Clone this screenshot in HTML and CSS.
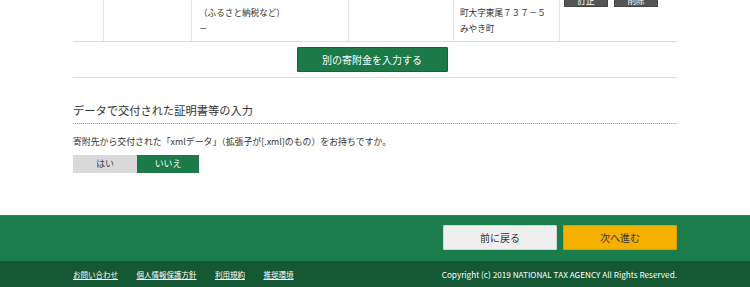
FILE: index.html
```html
<!DOCTYPE html>
<html lang="ja">
<head>
<meta charset="utf-8">
<link rel="stylesheet" href="styles.css">
</head>
<body>
<main class="content">
  <div class="table-clip">
    <div class="row">
      <div class="cell c1"></div>
      <div class="cell c2"></div>
      <div class="cell c3"><p>（ふるさと納税など）</p><p>－</p></div>
      <div class="cell c4"></div>
      <div class="cell c5"><p>町大字東尾７３７－５</p><p>みやき町</p></div>
      <div class="cell c6"><div class="ops"><span class="op">訂正</span><span class="op">削除</span></div></div>
    </div>
  </div>
  <div class="add-row">
    <button class="btn-green">別の寄附金を入力する</button>
  </div>
  <section class="xml">
    <h2 class="heading">データで交付された証明書等の入力</h2>
    <p class="question">寄附先から交付された「xmlデータ」（拡張子が[.xml]のもの）をお持ちですか。</p>
    <div class="toggle">
      <span class="opt">はい</span><span class="opt on">いいえ</span>
    </div>
  </section>
</main>
<footer class="footer">
  <div class="nav-band">
    <div class="inner nav">
      <button class="btn back">前に戻る</button>
      <button class="btn next">次へ進む</button>
    </div>
  </div>
  <div class="bottom-band">
    <div class="inner bottom">
      <ul class="links">
        <li><a href="#">お問い合わせ</a></li>
        <li><a href="#">個人情報保護方針</a></li>
        <li><a href="#">利用規約</a></li>
        <li><a href="#">推奨環境</a></li>
      </ul>
      <p class="copy">Copyright (c) 2019 NATIONAL TAX AGENCY All Rights Reserved.</p>
    </div>
  </div>
</footer>
</body>
</html>
```

FILE: styles.css
```css
* { box-sizing: border-box; }
html, body { margin: 0; padding: 0; }
body {
  width: 750px;
  height: 287px;
  overflow: hidden;
  background: #fff;
  color: #333;
  font-family: "Noto Sans CJK JP", "Noto Sans", sans-serif;
}
p { margin: 0; }
.content {
  width: 604px;
  margin: 0 auto;
}
.table-clip {
  height: 42px;
  overflow: hidden;
  border-bottom: 1px solid #dcdcdc;
}
.row {
  display: flex;
  height: 41px;
  font-size: 8.6px;
  line-height: 16px;
}
.cell {
  border-left: 1px solid #e3e3e3;
  padding: 4px 6px 0 7px;
  white-space: nowrap;
}
.cell.c1 { width: 30px; border-left: none; }
.c2 { width: 88px; }
.c3 { width: 157px; }
.c4 { width: 105px; }
.c5 { width: 106px; padding-left: 6px; }
.c6 { width: 118px; padding: 0 0 0 4px; }
.ops {
  display: flex;
  gap: 6px;
}
.op {
  display: block;
  width: 44px;
  height: 7px;
  overflow: hidden;
  background: #555;
  border: 1px solid #444;
  border-top: none;
  color: #fff;
  text-align: center;
  line-height: 0;
  font-size: 8.6px;
  border-radius: 0 0 1px 1px;
}
.add-row {
  display: flex;
  justify-content: center;
  padding: 5px 0;
  border-bottom: 1px solid #dcdcdc;
}
.btn-green {
  width: 151px;
  height: 25px;
  margin-right: 6px;
  background: #1b7a48;
  border: 1px solid #146239;
  border-radius: 1px;
  color: #fff;
  font-family: inherit;
  font-size: 10px;
  padding: 0;
}
.xml { padding-top: 24px; }
.heading {
  margin: 0;
  font-weight: normal;
  font-size: 11.25px;
  line-height: 16px;
  color: #333;
  padding-bottom: 6px;
  background-image: linear-gradient(to right, #e9a00c 50%, #f8e3b8 50%);
  background-size: 2px 1px;
  background-repeat: repeat-x;
  background-position: left bottom;
}
.question {
  font-size: 8.9px;
  line-height: 14px;
  margin-top: 11px;
}
.toggle {
  display: flex;
  margin-top: 6px;
}
.opt {
  display: inline-block;
  height: 18px;
  line-height: 18px;
  font-size: 8.9px;
  text-align: center;
}
.opt:first-child {
  width: 64px;
  background: #d9d9d9;
  color: #444;
}
.opt.on {
  width: 62px;
  background: #1b7a48;
  color: #fff;
}
.footer { margin-top: 42px; }
.inner {
  width: 604px;
  margin: 0 auto;
}
.nav-band {
  background: #1b7d4b;
  height: 46px;
  border-top: 1px solid #2c8a58;
}
.nav {
  display: flex;
  justify-content: flex-end;
  gap: 6px;
  padding-top: 9px;
}
.btn {
  width: 114px;
  height: 25px;
  font-family: inherit;
  font-size: 10px;
  color: #333;
  padding: 0;
  border-radius: 1px;
}
.back {
  background: #efefef;
  border: 1px solid #d6d6d6;
}
.next {
  background: #f5b000;
  border: 1px solid #dc9e00;
}
.bottom-band {
  background: #145834;
  height: 26px;
}
.bottom {
  display: flex;
  justify-content: space-between;
  align-items: center;
  height: 26px;
  font-size: 7.5px;
  color: #fff;
}
.links {
  display: flex;
  gap: 18.5px;
  list-style: none;
  margin: 0;
  padding: 0;
}
.links a {
  color: #fff;
  text-decoration: underline;
}
.copy {
  white-space: nowrap;
  font-size: 8.2px;
}
```
